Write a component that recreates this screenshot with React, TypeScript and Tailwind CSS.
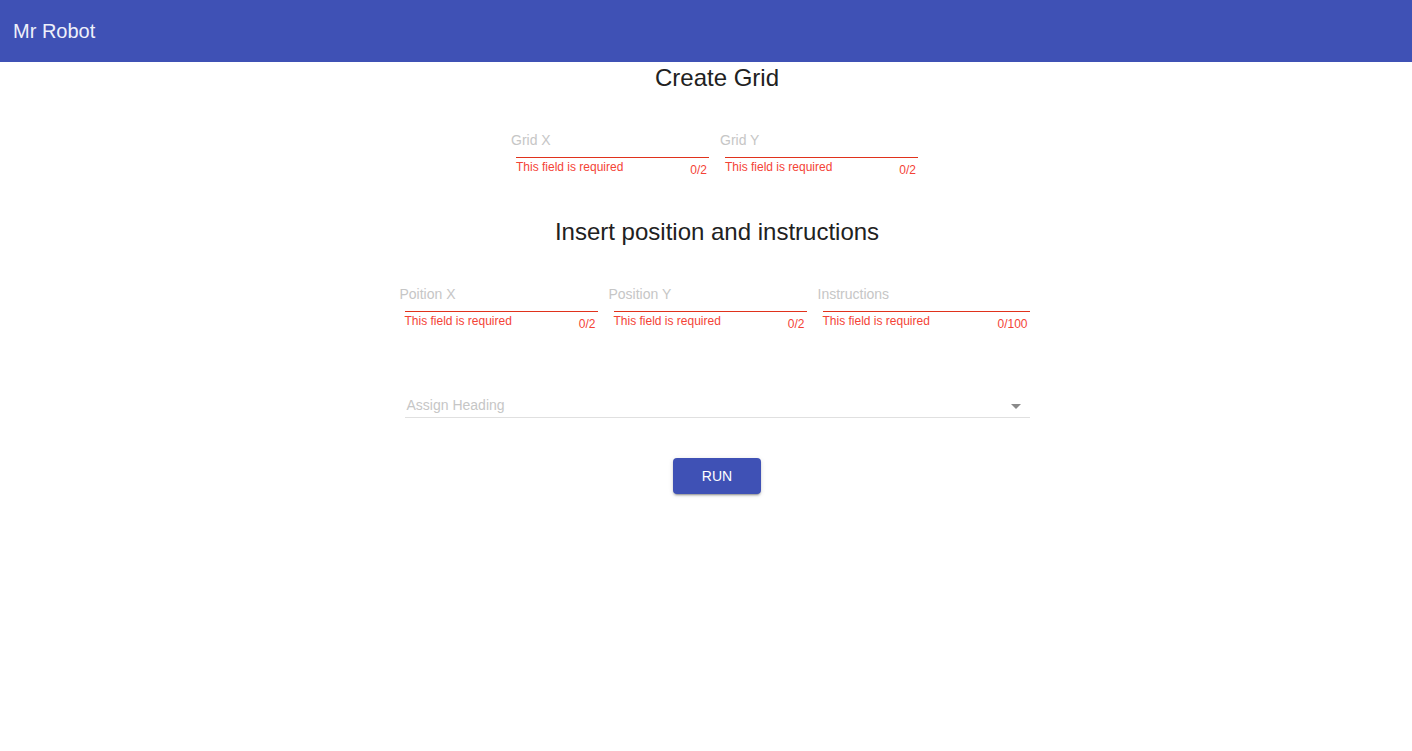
import React from "react";

function Field({ label, count, width }: { label: string; count: string; width: string }) {
  return (
    <div className={`flex flex-col ${width}`}>
      <div className="-ml-[5px] h-[20px] text-[14px] leading-[20px] text-[#c6c6c6] whitespace-nowrap">{label}</div>
      <div className="mt-[7px] h-[1px] bg-[#e0321c]" />
      <div className="mt-[2px] flex justify-between pr-[2px] text-[12px] leading-[14px] text-[#f44336]">
        <span>This field is required</span>
        <span className="mt-[3px]">{count}</span>
      </div>
    </div>
  );
}

export default function App() {
  return (
    <div className="min-h-[751px] bg-white" style={{ fontFamily: '"Liberation Sans", Arial, sans-serif' }}>
      <header className="h-[62px] bg-[#3f51b5] flex items-center px-[13px] text-[20px] text-[#eef0fa]">
        Mr Robot
      </header>
      <main className="pl-[22px] flex flex-col items-center text-[#212121]">
        <h2 className="h-[30px] pt-[2px] text-[24px] leading-[28px]">Create Grid</h2>
        <div className="mt-[38px] flex gap-[16px]">
          <Field label="Grid X" count="0/2" width="w-[193px]" />
          <Field label="Grid Y" count="0/2" width="w-[193px]" />
        </div>
        <h2 className="mt-[41px] h-[28px] text-[24px] leading-[28px]">Insert position and instructions</h2>
        <div className="mt-[38px] flex gap-[16px]">
          <Field label="Poition X" count="0/2" width="w-[193px]" />
          <Field label="Position Y" count="0/2" width="w-[193px]" />
          <Field label="Instructions" count="0/100" width="w-[207px]" />
        </div>
        <div className="mt-[64px] w-[625px] flex flex-col">
          <div className="h-[20px] flex items-center justify-between pl-[2px] pr-[9px]">
            <span className="text-[14px] leading-[20px] text-[#c6c6c6]">Assign Heading</span>
            <span className="mt-[3px] w-0 h-0 border-l-[5px] border-r-[5px] border-t-[5px] border-l-transparent border-r-transparent border-t-[#8a8a8a]" />
          </div>
          <div className="mt-[2px] h-[1px] bg-[#e0e0e0]" />
        </div>
        <button className="mt-[40px] w-[88px] h-[36px] rounded-[4px] bg-[#3f51b5] text-white text-[14px] shadow-[0_3px_1px_-2px_rgba(0,0,0,0.2),0_2px_2px_0_rgba(0,0,0,0.14),0_1px_5px_0_rgba(0,0,0,0.12)]">
          RUN
        </button>
      </main>
    </div>
  );
}
